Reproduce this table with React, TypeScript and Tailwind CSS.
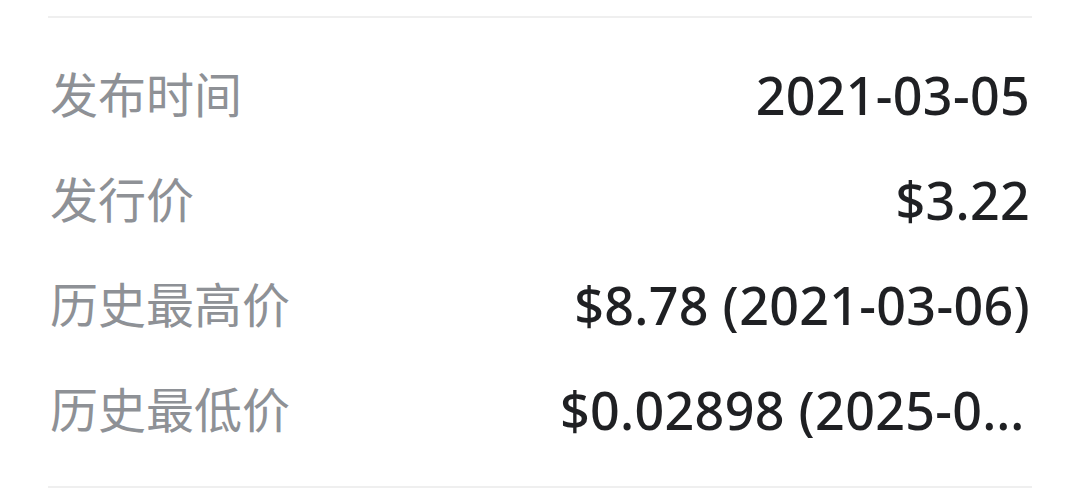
const rows = [
  { label: '发布时间', value: '2021-03-05' },
  { label: '发行价', value: '$3.22' },
  { label: '历史最高价', value: '$8.78 (2021-03-06)' },
  { label: '历史最低价', value: '$0.02898 (2025-04-07)' },
]

export default function App() {
  return (
    <div className="w-[1080px] h-[490px] bg-white pt-[16px] px-[48px]">
      <div className="border-t-2 border-b-2 border-[#efefef] py-[24px]">
        {rows.map((row) => (
          <div key={row.label} className="h-[105px] flex items-center justify-between gap-8 px-[2px]">
            <span
              className="text-[48px] text-[#8e9196] whitespace-nowrap"
              style={{ fontFamily: '"Noto Sans", "Noto Sans CJK SC", sans-serif' }}
            >
              {row.label}
            </span>
            <span
              className="text-[52px] font-medium tracking-[0.3px] text-[#1f2023] truncate max-w-[470px]"
              style={{ fontFamily: '"Noto Sans", "Noto Sans CJK SC", sans-serif' }}
            >
              {row.value}
            </span>
          </div>
        ))}
      </div>
    </div>
  )
}
